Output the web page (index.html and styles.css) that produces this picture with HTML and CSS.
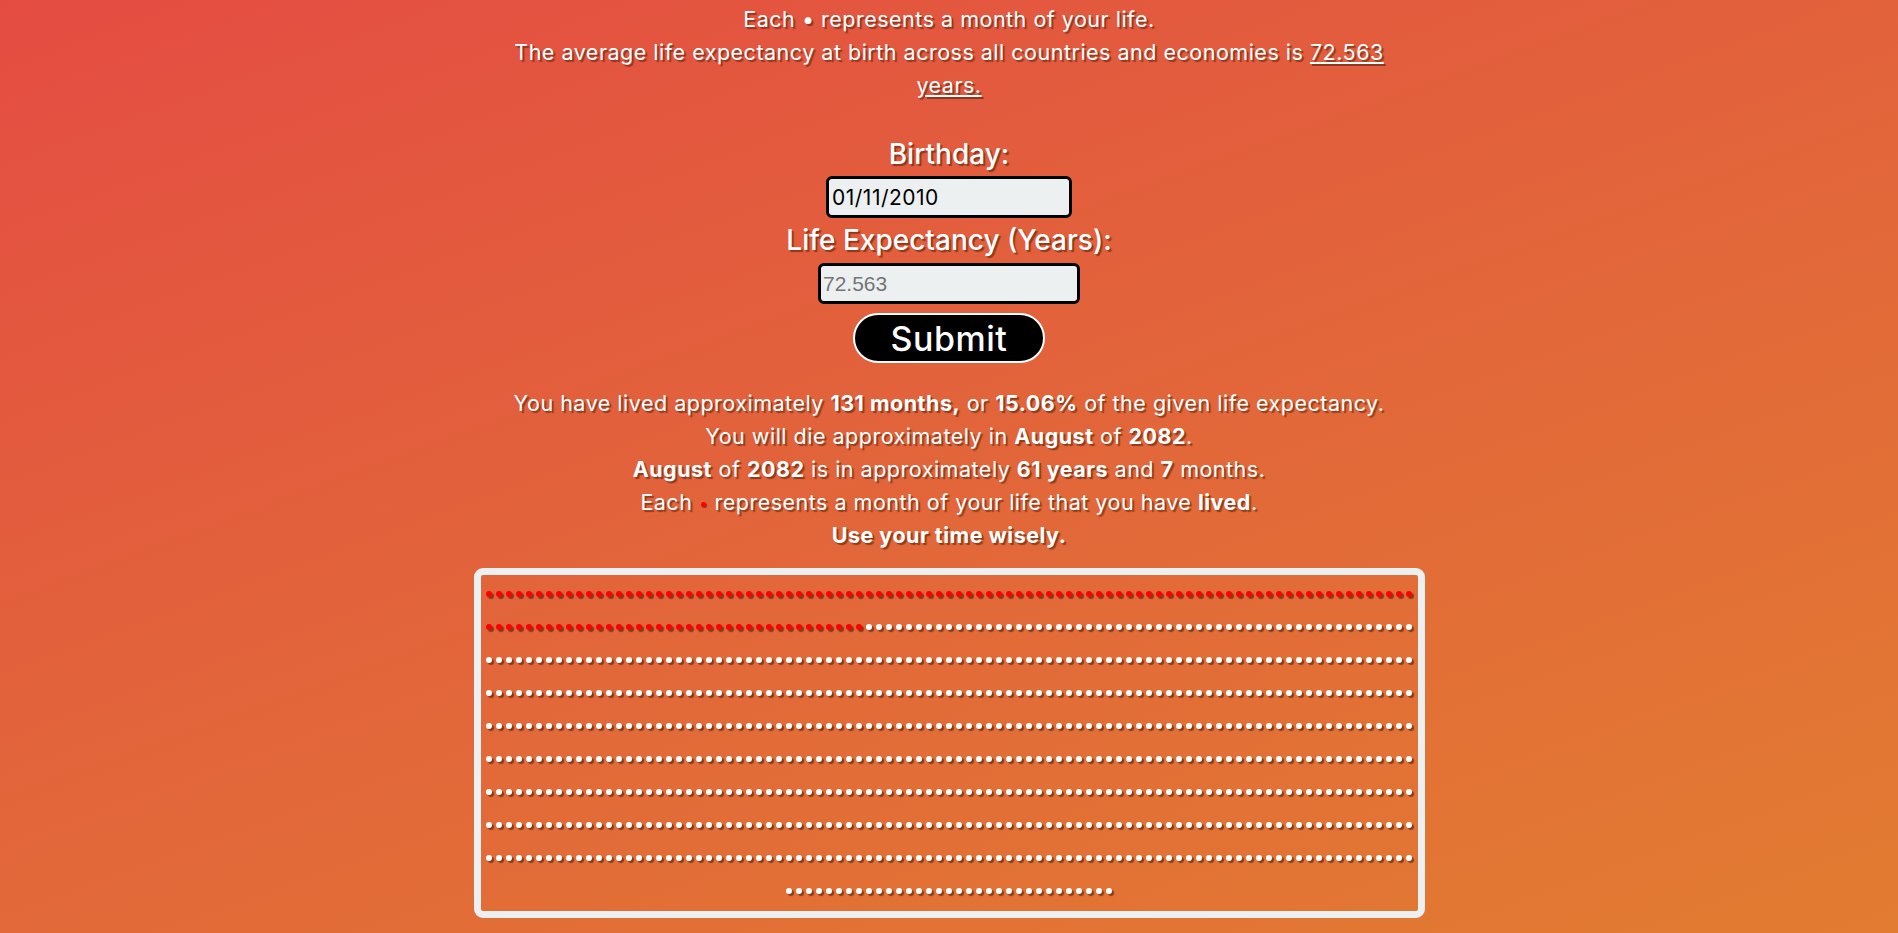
FILE: index.html
```html
<!DOCTYPE html>
<html lang="en">
<head>
<meta charset="utf-8">
<title>Life in Months</title>
<link rel="stylesheet" href="styles.css">
</head>
<body>
<main class="page">
  <section class="intro">
    <p>Each • represents a month of your life.</p>
    <p>The average life expectancy at birth across all countries and economies is <a class="link" href="#">72.563 years.</a></p>
  </section>

  <form class="form">
    <label class="label" for="birthday">Birthday:</label>
    <input class="field field-date" id="birthday" type="text" value="01/11/2010">
    <label class="label label-gap" for="expectancy">Life Expectancy (Years):</label>
    <input class="field field-number" id="expectancy" type="text" placeholder="72.563">
    <button class="submit" type="button">Submit</button>
  </form>

  <section class="results">
    <p>You have lived approximately <b>131 months,</b> or <b>15.06%</b> of the given life expectancy.</p>
    <p>You will die approximately in <b>August</b> of <b>2082</b>.</p>
    <p><b>August</b> of <b>2082</b> is in approximately <b>61 years</b> and <b>7</b> months.</p>
    <p>Each <span class="legend-dot"></span> represents a month of your life that you have <b>lived</b>.</p>
    <p><b>Use your time wisely.</b></p>
  </section>

  <section class="grid-box">
    <div class="dots" id="dots" data-total="870" data-lived="131"></div>
  </section>
</main>
<script src="script.js"></script>
</body>
</html>
```

FILE: styles.css
```css
html, body {
  margin: 0;
  padding: 0;
}

body {
  min-height: 100vh;
  background: linear-gradient(160deg, #e44c42 0%, #e2633b 45%, #e27c31 100%);
  font-family: "Inter", "Open Sans", sans-serif;
  color: #ffffff;
  text-align: center;
  text-shadow: 2px 2px 1px rgba(70, 25, 5, 0.55);
}

.page {
  width: 951px;
  margin: 0 auto;
  padding-top: 3px;
}

.intro p,
.results p {
  margin: 0;
  font-size: 21.5px;
  letter-spacing: 0.5px;
  line-height: 33px;
}

.intro p + p {
  padding: 0 20px;
}

.link {
  color: #ffffff;
  text-decoration: underline;
}

.form {
  margin-top: 33px;
  display: flex;
  flex-direction: column;
  align-items: center;
}

.label {
  display: block;
  font-size: 28px;
  line-height: 39px;
  font-weight: 500;
}

.label-gap {
  margin-top: 3px;
}

.field {
  box-sizing: border-box;
  border: 3px solid #000000;
  border-radius: 6px;
  background: #ecf0f1;
  color: #000000;
  outline: none;
  text-shadow: none;
}

.field-date {
  margin-top: 2px;
  width: 246px;
  height: 42px;
  padding: 0 3px;
  font-family: "Inter", "Open Sans", sans-serif;
  font-size: 21px;
  letter-spacing: 0.5px;
}

.field-number {
  margin-top: 3px;
  width: 262px;
  height: 41px;
  padding: 0 2px;
  font-family: "Liberation Sans", Arial, sans-serif;
  font-size: 21px;
}

.field-number::placeholder {
  color: #757575;
}

.submit {
  margin-top: 9px;
  box-sizing: border-box;
  width: 192px;
  height: 50px;
  padding: 0;
  border: 2px solid #ffffff;
  border-radius: 25px;
  background: #000000;
  color: #ffffff;
  font-family: "Inter", "Open Sans", sans-serif;
  font-size: 34px;
  font-weight: 500;
  letter-spacing: 0.5px;
  cursor: pointer;
}

.results {
  margin-top: 24px;
}

.results b {
  font-weight: 700;
}

.legend-dot {
  display: inline-block;
  width: 5px;
  height: 5px;
  border-radius: 50%;
  background: #ff0000;
  box-shadow: 1px 1px 1px rgba(70, 25, 5, 0.6);
  vertical-align: middle;
  margin: 0 2px;
}

.grid-box {
  margin-top: 16px;
  box-sizing: border-box;
  width: 951px;
  padding-bottom: 6px;
  border: 7px solid #ecf0f1;
  border-radius: 9px;
}

.dots {
  display: flex;
  flex-wrap: wrap;
  justify-content: center;
}

.dot {
  position: relative;
  width: 10px;
  height: 33px;
}

.dot::before {
  content: "";
  position: absolute;
  left: 2px;
  top: 16px;
  width: 6px;
  height: 6px;
  border-radius: 50%;
  background: #ffffff;
  box-shadow: 2px 2px 1px rgba(70, 25, 5, 0.6);
}

.dot-lived::before {
  background: #ff0000;
}
```

FILE: script.js
```js
(function () {
  var box = document.getElementById('dots');
  var total = parseInt(box.getAttribute('data-total'), 10);
  var lived = parseInt(box.getAttribute('data-lived'), 10);
  var frag = document.createDocumentFragment();
  for (var i = 0; i < total; i++) {
    var s = document.createElement('span');
    s.className = i < lived ? 'dot dot-lived' : 'dot';
    frag.appendChild(s);
  }
  box.appendChild(frag);
})();
```
